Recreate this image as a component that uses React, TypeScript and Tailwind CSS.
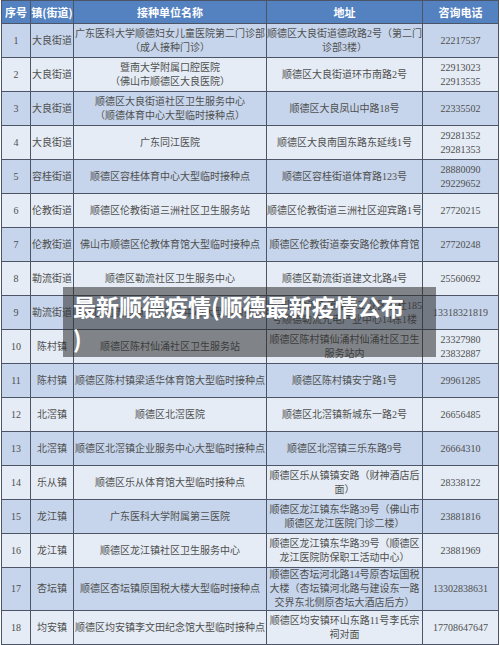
import React from "react";

type Row = {
  no: number;
  town: string;
  name: string[];
  addr: string[];
  tel: string[];
};

const rows: Row[] = [
  { no: 1, town: "大良街道", name: ["广东医科大学顺德妇女儿童医院第二门诊部", "（成人接种门诊）"], addr: ["顺德区大良街道德政路2号（第二门", "诊部3楼）"], tel: ["22217537"] },
  { no: 2, town: "大良街道", name: ["暨南大学附属口腔医院", "（佛山市顺德区大良医院）"], addr: ["顺德区大良街道环市南路2号"], tel: ["22913023", "22913535"] },
  { no: 3, town: "大良街道", name: ["顺德区大良街道社区卫生服务中心", "（顺德体育中心大型临时接种点）"], addr: ["顺德区大良凤山中路18号"], tel: ["22335502"] },
  { no: 4, town: "大良街道", name: ["广东同江医院"], addr: ["顺德区大良南国东路东延线1号"], tel: ["29281352", "29281353"] },
  { no: 5, town: "容桂街道", name: ["顺德区容桂体育中心大型临时接种点"], addr: ["顺德区容桂街道体育路123号"], tel: ["28880090", "29229652"] },
  { no: 6, town: "伦教街道", name: ["顺德区伦教街道三洲社区卫生服务站"], addr: ["顺德区伦教街道三洲社区迎宾路1号"], tel: ["27720215"] },
  { no: 7, town: "伦教街道", name: ["佛山市顺德区伦教体育馆大型临时接种点"], addr: ["顺德区伦教街道泰安路伦教体育馆"], tel: ["27720248"] },
  { no: 8, town: "勒流街道", name: ["顺德区勒流社区卫生服务中心"], addr: ["顺德区勒流街道建文北路4号"], tel: ["25560692"] },
  { no: 9, town: "勒流街道", name: ["顺德区勒流街道光电产业中心大型临时接种点"], addr: ["顺德区勒流街道富安工业区连杜185", "号顺德勒流光电产业中心14栋1楼"], tel: ["13318321819"] },
  { no: 10, town: "陈村镇", name: ["顺德区陈村仙涌社区卫生服务站"], addr: ["顺德区陈村镇仙涌村仙涌社区卫生", "服务站内"], tel: ["23327980", "23832887"] },
  { no: 11, town: "陈村镇", name: ["顺德区陈村镇梁适华体育馆大型临时接种点"], addr: ["顺德区陈村镇安宁路1号"], tel: ["29961285"] },
  { no: 12, town: "北滘镇", name: ["顺德区北滘医院"], addr: ["顺德区北滘镇新城东一路2号"], tel: ["26656485"] },
  { no: 13, town: "北滘镇", name: ["顺德区北滘镇企业服务中心大型临时接种点"], addr: ["顺德区北滘镇三乐东路9号"], tel: ["26664310"] },
  { no: 14, town: "乐从镇", name: ["顺德区乐从体育馆大型临时接种点"], addr: ["顺德区乐从镇镇安路（财神酒店后", "面）"], tel: ["28338122"] },
  { no: 15, town: "龙江镇", name: ["广东医科大学附属第三医院"], addr: ["顺德区龙江镇东华路39号（佛山市", "顺德区龙江医院门诊二楼）"], tel: ["23881816"] },
  { no: 16, town: "龙江镇", name: ["顺德区龙江镇社区卫生服务中心"], addr: ["顺德区龙江镇东华路39号（顺德区", "龙江医院防保职工活动中心）"], tel: ["23881969"] },
  { no: 17, town: "杏坛镇", name: ["顺德区杏坛镇原国税大楼大型临时接种点"], addr: ["顺德区杏坛河北路14号原杏坛国税", "大楼（杏坛镇河北路与建设东一路", "交界东北侧原杏坛大酒店后方）"], tel: ["13302838631"] },
  { no: 18, town: "均安镇", name: ["顺德区均安镇李文田纪念馆大型临时接种点"], addr: ["顺德区均安镇环山东路11号李氏宗", "祠对面"], tel: ["17708647647"] },
];

const Lines = ({ items }: { items: string[] }) => (
  <>
    {items.map((t, i) => (
      <div key={i}>{t}</div>
    ))}
  </>
);

const App = () => {
  return (
    <div
      className="relative w-[500px] h-[645px] bg-white overflow-hidden pl-px"
      style={{ fontFamily: '"Liberation Serif", "Noto Sans CJK SC", serif' }}
    >
      <table className="table-fixed border-collapse w-[497px] text-[10px] leading-[14px] text-[#4f4f4f]">
        <colgroup>
          <col className="w-[29px]" />
          <col className="w-[43px]" />
          <col className="w-[193px]" />
          <col className="w-[156px]" />
          <col className="w-[76px]" />
        </colgroup>
        <thead>
          <tr className="h-[23px] bg-[#5482c0] text-white text-[11px] font-bold" style={{ fontFamily: '"Noto Sans CJK SC", sans-serif' }}>
            <th className="border border-[#4b5566] font-bold">序号</th>
            <th className="border border-[#4b5566] font-bold whitespace-nowrap">镇(街道)</th>
            <th className="border border-[#4b5566] font-bold">接种单位名称</th>
            <th className="border border-[#4b5566] font-bold">地址</th>
            <th className="border border-[#4b5566] font-bold">咨询电话</th>
          </tr>
        </thead>
        <tbody>
          {rows.map((r) => (
            <tr
              key={r.no}
              className={`${r.no % 2 === 1 ? "bg-[#c6d5eb]" : "bg-[#e5ecf5]"} ${r.no === 17 ? "h-[41px]" : "h-[34px]"}`}
            >
              <td className="border border-[#4b5566] text-center">{r.no}</td>
              <td className="border border-[#4b5566] text-center whitespace-nowrap">{r.town}</td>
              <td className="border border-[#4b5566] text-center whitespace-nowrap">
                <Lines items={r.name} />
              </td>
              <td className="border border-[#4b5566] text-center whitespace-nowrap">
                <Lines items={r.addr} />
              </td>
              <td className="border border-[#4b5566] text-center">
                <Lines items={r.tel} />
              </td>
            </tr>
          ))}
        </tbody>
      </table>

      <div
        className="absolute left-[63px] top-[287px] w-[373px] h-[70px] bg-[rgba(45,45,45,0.55)] pl-[10px] pt-[3px] text-white font-bold text-[23px] leading-[32px]"
        style={{ fontFamily: '"Noto Sans CJK SC", sans-serif' }}
      >
        最新顺德疫情(顺德最新疫情公布
        <br />)
      </div>
    </div>
  );
};

export default App;
